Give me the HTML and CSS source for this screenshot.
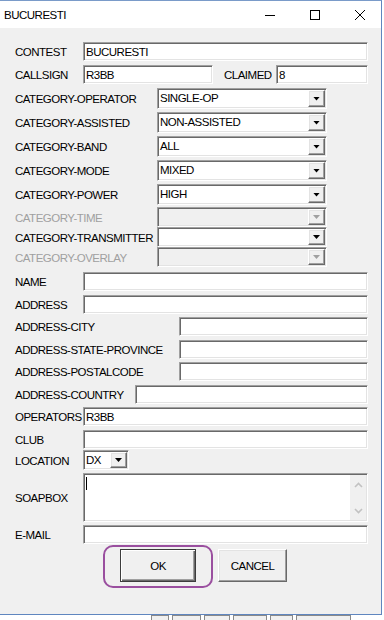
FILE: index.html
```html
<!DOCTYPE html>
<html lang="en">
<head>
  <meta charset="UTF-8" />
  <title>BUCURESTI</title>
  <link rel="stylesheet" href="styles.css">
</head>
<body>
  <div class="window">
    <div class="titlebar">
      <span class="title">BUCURESTI</span>
      <div class="caption">
        <svg class="cap-icon" width="10" height="10" viewBox="0 0 10 10"><path d="M0 5.5H10" stroke="#000" stroke-width="1"/></svg>
        <svg class="cap-icon" width="10" height="10" viewBox="0 0 10 10"><rect x="0.5" y="0.5" width="9" height="9" fill="none" stroke="#000" stroke-width="1"/></svg>
        <svg class="cap-icon" width="10" height="10" viewBox="0 0 10 10"><path d="M0 0L10 10M10 0L0 10" stroke="#000" stroke-width="1"/></svg>
      </div>
    </div>

    <div class="client">
      <!-- header -->
      <div class="group group-top">
        <div class="row">
          <span class="lbl lbl-short">CONTEST</span>
          <div class="edit grow">BUCURESTI</div>
        </div>
        <div class="row">
          <span class="lbl lbl-short">CALLSIGN</span>
          <div class="edit callsign">R3BB</div>
          <span class="lbl claimed">CLAIMED</span>
          <div class="edit grow">8</div>
        </div>
      </div>

      <!-- categories -->
      <div class="group group-cat">
        <div class="row row-cat">
          <span class="lbl lbl-cat">CATEGORY-OPERATOR</span>
          <div class="combo combo-cat"><span class="combo-text">SINGLE-OP</span><span class="combo-btn"></span></div>
        </div>
        <div class="row row-cat">
          <span class="lbl lbl-cat">CATEGORY-ASSISTED</span>
          <div class="combo combo-cat"><span class="combo-text">NON-ASSISTED</span><span class="combo-btn"></span></div>
        </div>
        <div class="row row-cat">
          <span class="lbl lbl-cat">CATEGORY-BAND</span>
          <div class="combo combo-cat"><span class="combo-text">ALL</span><span class="combo-btn"></span></div>
        </div>
        <div class="row row-cat">
          <span class="lbl lbl-cat">CATEGORY-MODE</span>
          <div class="combo combo-cat"><span class="combo-text">MIXED</span><span class="combo-btn"></span></div>
        </div>
        <div class="row row-cat">
          <span class="lbl lbl-cat">CATEGORY-POWER</span>
          <div class="combo combo-cat"><span class="combo-text">HIGH</span><span class="combo-btn"></span></div>
        </div>
      </div>
      <div class="group group-cat2">
        <div class="row row-cat2">
          <span class="lbl lbl-cat disabled">CATEGORY-TIME</span>
          <div class="combo combo-cat off"><span class="combo-text"></span><span class="combo-btn"></span></div>
        </div>
        <div class="row row-cat2">
          <span class="lbl lbl-cat">CATEGORY-TRANSMITTER</span>
          <div class="combo combo-cat"><span class="combo-text"></span><span class="combo-btn"></span></div>
        </div>
        <div class="row row-cat2">
          <span class="lbl lbl-cat disabled">CATEGORY-OVERLAY</span>
          <div class="combo combo-cat off"><span class="combo-text"></span><span class="combo-btn"></span></div>
        </div>
      </div>

      <!-- station / address -->
      <div class="group group-addr">
        <div class="row">
          <span class="lbl lbl-short">NAME</span>
          <div class="edit grow"></div>
        </div>
        <div class="row">
          <span class="lbl lbl-short">ADDRESS</span>
          <div class="edit grow"></div>
        </div>
        <div class="row">
          <span class="lbl lbl-long">ADDRESS-CITY</span>
          <div class="edit grow"></div>
        </div>
        <div class="row">
          <span class="lbl lbl-long">ADDRESS-STATE-PROVINCE</span>
          <div class="edit grow"></div>
        </div>
        <div class="row">
          <span class="lbl lbl-long">ADDRESS-POSTALCODE</span>
          <div class="edit grow"></div>
        </div>
        <div class="row">
          <span class="lbl lbl-mid">ADDRESS-COUNTRY</span>
          <div class="edit grow"></div>
        </div>
        <div class="row">
          <span class="lbl lbl-short">OPERATORS</span>
          <div class="edit grow">R3BB</div>
        </div>
        <div class="row">
          <span class="lbl lbl-short">CLUB</span>
          <div class="edit grow"></div>
        </div>
      </div>

      <div class="group group-misc">
        <div class="row row-loc">
          <span class="lbl lbl-short">LOCATION</span>
          <div class="combo combo-loc"><span class="combo-text">DX</span><span class="combo-btn"></span></div>
        </div>
        <div class="row row-memo">
          <span class="lbl lbl-short">SOAPBOX</span>
          <div class="memo grow">
            <div class="memo-area"><span class="caret"></span></div>
            <div class="scrollbar">
              <svg width="9" height="6" viewBox="0 0 9 6"><path d="M1 5L4.5 1.5L8 5" fill="none" stroke="#c2c2c2" stroke-width="1.6"/></svg>
              <svg width="9" height="6" viewBox="0 0 9 6"><path d="M1 1L4.5 4.5L8 1" fill="none" stroke="#c2c2c2" stroke-width="1.6"/></svg>
            </div>
          </div>
        </div>
        <div class="row">
          <span class="lbl lbl-short">E-MAIL</span>
          <div class="edit grow"></div>
        </div>
      </div>

      <div class="buttons">
        <div class="btn-wrap">
          <button class="btn btn-ok">OK</button>
          <span class="ring"></span>
        </div>
        <button class="btn btn-cancel">CANCEL</button>
      </div>
    </div>
  </div>

  <div class="behind">
    <span class="tab t1"></span>
    <span class="tab t2"></span>
    <span class="tab t3"></span>
    <span class="tab t4"></span>
    <span class="tab t5"></span>
    <span class="tab t6"></span>
  </div>
</body>
</html>
```

FILE: styles.css
```css
* { box-sizing: border-box; }
body {
  margin: 0;
  background: #fff;
  color: #000;
  font-family: "Liberation Sans", Arial, sans-serif;
  font-size: 11.5px;
  letter-spacing: -0.5px;
  width: 384px;
  overflow: hidden;
}

.window {
  width: 382px;
  height: 615px;
  background: #f0f0f0;
  border-top: 1px solid #7a9bc9;
  border-right: 1px solid #5f86bf;
  border-bottom: 1px solid #5f86bf;
  display: flex;
  flex-direction: column;
}

/* title bar */
.titlebar {
  height: 27px;
  background: #fff;
  display: flex;
  align-items: center;
  padding-left: 4px;
}
.title { flex: 1; }
.caption { display: flex; gap: 35px; padding-right: 16px; }
.cap-icon { display: block; }

/* client area */
.client { padding: 14px 13px 0 15px; }
.group { display: flex; flex-direction: column; }
.row { display: flex; align-items: center; height: 19px; }
.grow { flex: 1; }

.group-top { gap: 4px; }
.group-cat { margin-top: 4px; gap: 3px; }
.group-cat2 { margin-top: 2px; }
.group-addr { margin-top: 5px; gap: 3.5px; }
.group-misc { margin-top: 1.5px; gap: 3px; }

.row-cat { height: 21px; }
.row-cat2 { height: 20px; }
.row-loc { height: 20px; }
.row-memo { height: 49px; }

.lbl { white-space: nowrap; flex: none; padding-top: 1px; }
.lbl-short { width: 68px; }
.lbl-cat { width: 142px; }
.lbl-long { width: 164px; }
.lbl-mid { width: 120px; }
.claimed { margin-left: 11px; width: 52px; }
.disabled { color: #a0a0a0; }

/* sunken edit box */
.edit, .combo, .memo {
  background: #fff;
  border-top: 1px solid #a0a0a0;
  border-left: 1px solid #a0a0a0;
  border-right: 1px solid #fff;
  border-bottom: 1px solid #fff;
  box-shadow: inset 1px 1px #696969, inset -1px -1px #e3e3e3;
}
.edit {
  height: 19px;
  padding: 1px 2px 0;
  line-height: 16px;
  white-space: nowrap;
  overflow: hidden;
}
.callsign { width: 130px; }

/* combo boxes */
.combo { height: 100%; display: flex; }
.combo-cat { width: 170px; }
.combo-loc { width: 46px; }
.combo-text { flex: 1; padding: 1px 0 0 2px; line-height: 16px; white-space: nowrap; }
.combo-btn {
  width: 17px;
  margin: 1px;
  background: #f0f0f0;
  border-top: 1px solid #fff;
  border-left: 1px solid #fff;
  border-right: 1px solid #696969;
  border-bottom: 1px solid #696969;
  box-shadow: inset -1px -1px #a0a0a0, inset 1px 1px #e3e3e3;
  display: flex;
  align-items: center;
  justify-content: center;
}
.combo-btn::after {
  content: "";
  width: 7px;
  height: 4px;
  background: #000;
  clip-path: polygon(0 0, 100% 0, 50% 100%);
}
.combo.off { background: #f0f0f0; }
.combo.off .combo-btn::after { background: #a0a0a0; }

/* soapbox memo */
.memo { height: 49px; display: flex; }
.memo-area { flex: 1; padding: 3px 0 0 2px; }
.caret { display: block; width: 1px; height: 13px; background: #000; }
.scrollbar {
  width: 16px;
  margin: 1px 1px 1px 0;
  background: #f0f0f0;
  display: flex;
  flex-direction: column;
  justify-content: space-between;
  align-items: center;
  padding: 7px 0 6px;
}
.scrollbar svg { display: block; }

/* buttons */
.buttons { display: flex; gap: 22px; margin-top: 5px; padding-left: 105px; }
.btn-wrap { position: relative; }
.btn {
  height: 33px;
  font: inherit;
  letter-spacing: inherit;
  color: #000;
  background: #f0f0f0;
  padding: 0;
  border-top: 1px solid #fff;
  border-left: 1px solid #fff;
  border-right: 1px solid #696969;
  border-bottom: 1px solid #696969;
  box-shadow: inset -1px -1px #a0a0a0, inset 1px 1px #e3e3e3;
}
.btn-ok {
  width: 76px;
  display: block;
  border: 1px solid #3c3c3c;
  box-shadow: inset 1px 1px #fff, inset -1px -1px #696969, inset -2px -2px #a0a0a0;
}
.btn-cancel { width: 69px; }
.ring {
  position: absolute;
  left: -17px;
  top: -4px;
  width: 110px;
  height: 43px;
  border: 2.5px solid #9a4f9f;
  border-radius: 10px;
}

/* window behind */
.behind { display: flex; height: 5px; padding-left: 151px; gap: 3px; }
.tab {
  background: #f0f0f0;
  border: 1px solid #8a8a8a;
  border-bottom: none;
}
.t1 { width: 18px; }
.t2 { width: 29px; }
.t3 { width: 26px; }
.t4 { width: 34px; }
.t5 { width: 23px; }
.t6 { width: 55px; }
```
